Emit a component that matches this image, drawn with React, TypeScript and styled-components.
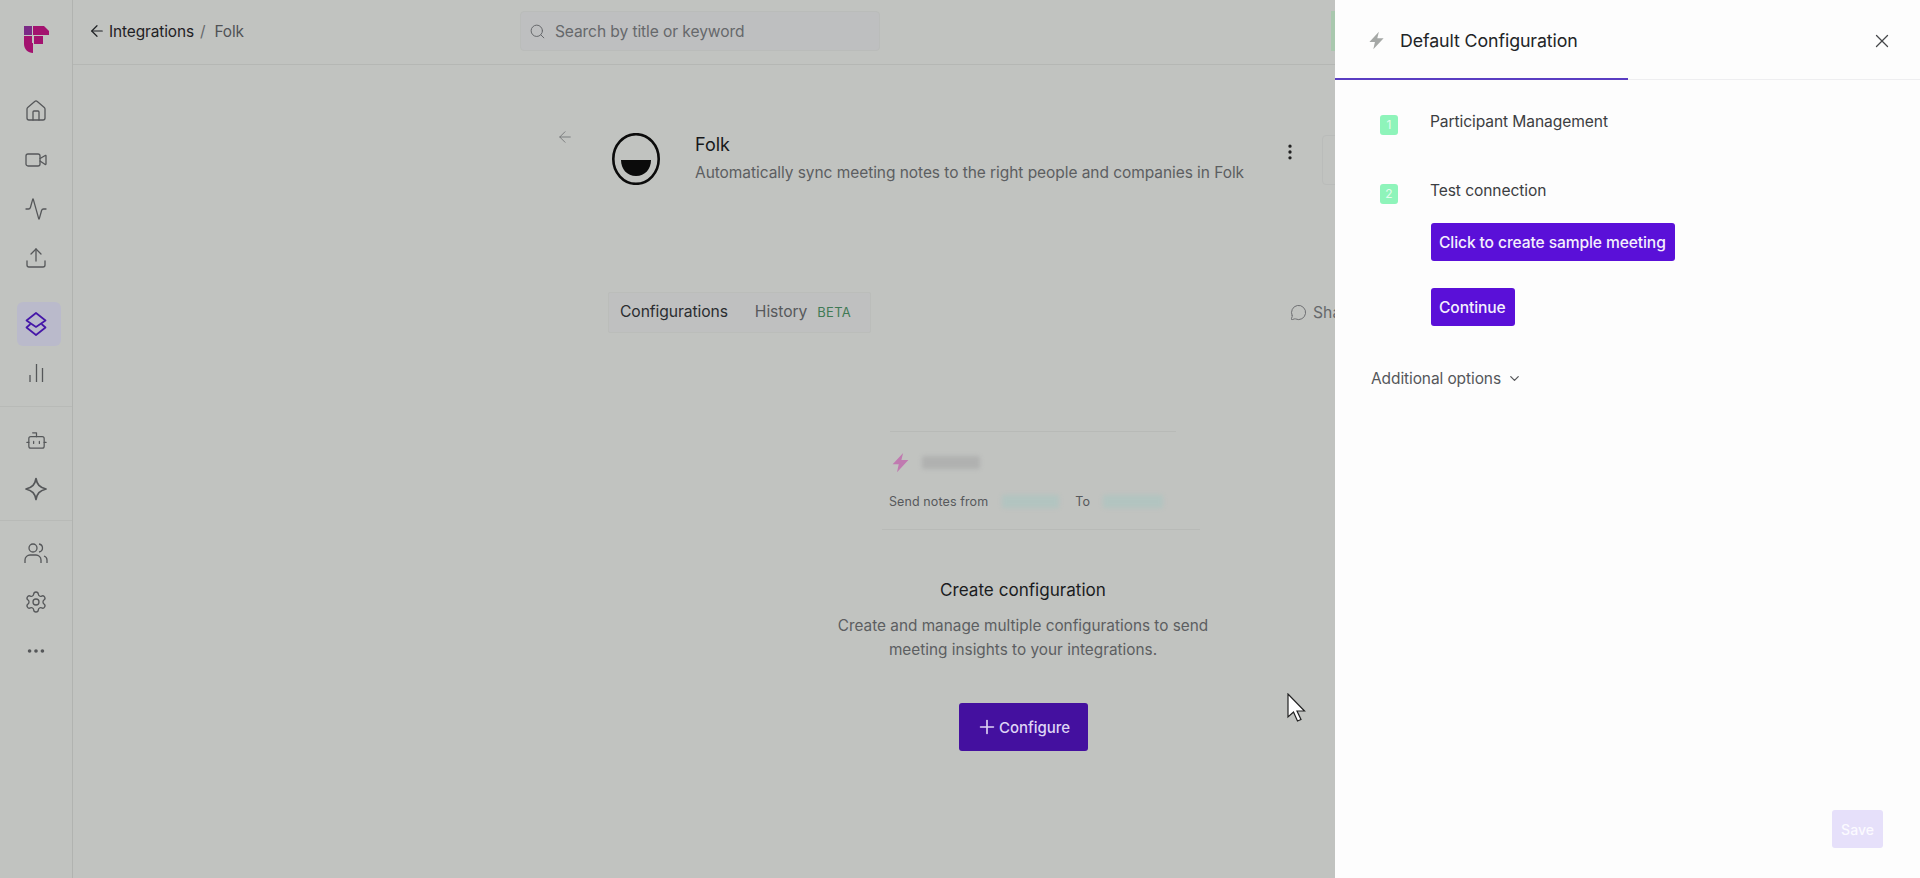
import React from 'react';
import styled, { createGlobalStyle } from 'styled-components';
import { House, Video, Activity, Upload, Bot, Settings, MoreHorizontal, Search, ArrowLeft, MoreVertical, MessageCircle, Plus, X, ChevronDown } from 'lucide-react';

const Global = createGlobalStyle`
  html, body { margin: 0; padding: 0; height: 100%; background: #c1c3c0; }
  body { font-family: Inter, "Liberation Sans", sans-serif; overflow: hidden; }
`;

const Page = styled.div`display: flex; width: 1920px; height: 878px; overflow: hidden; position: relative; background: #c1c3c0;`;
const Sidebar = styled.aside`width: 72px; flex: none; border-right: 1px solid #b1b3b0; box-sizing: content-box; display: flex; flex-direction: column; align-items: stretch; color: #555759;`;
const LogoWrap = styled.div`height: 89px; padding: 25px 0 0 24px; box-sizing: border-box;`;
const NavGroup = styled.div<{ $gapBelow: number; $gapAbove?: number; $ruled?: boolean }>`
  display: flex; flex-direction: column; gap: 5px; align-items: center;
  padding-top: ${p => p.$gapAbove ?? 0}px;
  padding-bottom: ${p => p.$gapBelow}px;
  border-bottom: 1px solid ${p => (p.$ruled ? '#b8bab7' : 'transparent')};
`;
const NavItem = styled.div<{ $active?: boolean }>`
  width: 44px; height: 44px; border-radius: 6px; display: flex; align-items: center; justify-content: center;
  box-sizing: border-box;
  margin-left: ${p => (p.$active ? 5 : 0)}px;
  padding-right: ${p => (p.$active ? 5 : 0)}px;
  background: ${p => (p.$active ? '#babacb' : 'transparent')};
  color: ${p => (p.$active ? '#4517a8' : '#555759')};
`;
const Main = styled.main`width: 1262px; flex: none; overflow: hidden; display: flex; flex-direction: column;`;
const Topbar = styled.header`height: 65px; flex: none; box-sizing: border-box; border-bottom: 1px solid #b5b7b4; display: flex; align-items: center; padding-left: 15px; padding-bottom: 2px;`;
const Crumbs = styled.nav`width: 433px; display: flex; align-items: center; font-size: 15.4px; color: #1f2124; letter-spacing: -0.1px;`;
const CrumbLink = styled.span`margin-left: 3px;`;
const CrumbSep = styled.span`margin: 0 9px 0 6px; color: #66686b;`;
const CrumbCurrent = styled.span`color: #505256;`;
const SearchBox = styled.div`width: 361px; height: 40px; box-sizing: border-box; border: 1px solid #babcba; border-radius: 4px; background: #bebfc0; display: flex; align-items: center; gap: 9px; padding-left: 8px; color: #66686b; font-size: 15.6px; letter-spacing: -0.1px;`;
const TopEdge = styled.div`width: 4px; height: 40px; margin-left: 451px; background: #a9c8ae;`;
const Column = styled.div`width: 830px; margin-left: 535px; display: flex; flex-direction: column;`;
const Header = styled.section`display: flex; align-items: flex-start; margin-top: 67px; height: 52px; white-space: nowrap;`;
const BackBtn = styled.div`width: 18px; margin: -4px 38px 0 -52px; color: #6e7072; flex: none;`;
const FolkText = styled.div`margin-left: 35px; width: 585px; flex: none;`;
const FolkName = styled.div`font-size: 18px; line-height: 26px; color: #17181a;`;
const FolkDesc = styled.div`font-size: 15.5px; line-height: 28px; margin-top: 1px; color: #5c5e61; letter-spacing: -0.06px;`;
const Kebab = styled.div`margin-top: 10px; color: #222; width: 42px; flex: none;`;
const EdgeBox = styled.div`width: 20px; height: 48px; flex: none; margin-top: 3px; border: 1px solid #babcba; border-radius: 4px;`;
const TabsRow = styled.section`display: flex; align-items: center; justify-content: space-between; margin-top: 108px; white-space: nowrap;`;
const Tabs = styled.div`width: 263px; height: 41px; box-sizing: border-box; border: 1px solid #bbbdba; border-radius: 2px; background: #bfc0c0; display: flex; align-items: center; padding: 0 0 3px 11px; font-size: 15.7px;`;
const Tab = styled.span<{ $on?: boolean }>`color: ${p => (p.$on ? '#2b2d30' : '#57595c')}; margin-right: ${p => (p.$on ? 27 : 10)}px; letter-spacing: -0.1px;`;
const Beta = styled.span`font-size: 13px; color: #3f7a55; letter-spacing: 0.3px; margin-top: 2px;`;
const Share = styled.div`display: flex; align-items: center; gap: 6px; margin-right: 82px; color: #66686b; font-size: 15.7px;`;
const Card = styled.section`margin: 98px 0 0 274px; width: 318px; height: 98px; display: flex; flex-direction: column; border-bottom: 1px solid #b8bab7;`;
const CardRule = styled.div`width: 286px; margin-left: 8px; border-top: 1px solid #b8bab7;`;
const CardTitle = styled.div`display: flex; align-items: center; gap: 11px; margin: 19px 0 0 8px; height: 22px;`;
const BlurChip = styled.div<{ $w: number; $c: string }>`width: ${p => p.$w}px; height: 13px; background: ${p => p.$c}; filter: blur(2px); border-radius: 2px;`;
const CardLine = styled.div`display: flex; align-items: center; margin: 21px 0 0 7px; font-size: 12.5px; color: #57595c; letter-spacing: 0.1px; white-space: nowrap;`;
const Gap = styled.span<{ $w: number }>`display: inline-block; width: ${p => p.$w}px;`;
const Empty = styled.section`display: flex; flex-direction: column; align-items: center; text-align: center; margin-top: 47px;`;
const EmptyTitle = styled.h2`margin: 0; font-size: 17.1px; font-weight: 400; line-height: 26px; color: #1b1c1e;`;
const EmptyDesc = styled.p`margin: 11px 0 0; font-size: 15.35px; line-height: 24px; color: #5c5e61; width: 420px;`;
const ConfigureBtn = styled.button`margin-top: 41px; width: 129px; height: 48px; border: 0; border-radius: 3px; background: #44109f; color: #dfd5f5; font: 500 15px Inter, sans-serif; display: flex; align-items: center; justify-content: center; gap: 1px; padding: 0;`;
const Panel = styled.aside`width: 586px; height: 878px; flex: none; background: #fdfdfd; display: flex; flex-direction: column;`;
const PanelHead = styled.header`height: 80px; flex: none; box-sizing: border-box; position: relative; border-bottom: 1px solid #eeeef0; display: flex; align-items: center; padding: 2px 28px 0 32px;
  &::after { content: ''; position: absolute; left: 0; bottom: -1px; width: 293px; height: 2px; background: #5a3dc2; }
`;
const PanelTitle = styled.h1`margin: 0 0 0 14px; flex: 1; font-size: 17.8px; font-weight: 400; color: #222426; letter-spacing: -0.1px;`;
const CloseBtn = styled.div`color: #45474a; display: flex;`;
const Steps = styled.div`padding: 30px 0 0 45px; display: flex; flex-direction: column;`;
const Step = styled.div<{ $gap: number }>`display: flex; align-items: flex-start; margin-bottom: ${p => p.$gap}px;`;
const Badge = styled.div`width: 18px; height: 20px; margin-top: 5px; border-radius: 3px; background: #8ef4ba; color: #e4fbee; font-size: 12px; line-height: 20px; text-align: center; flex: none;`;
const StepLabel = styled.div`margin: 1px 0 0 32px; font-size: 15.6px; line-height: 22px; color: #3c3e42; letter-spacing: -0.1px;`;
const PanelActions = styled.div`display: flex; flex-direction: column; align-items: flex-start; gap: 27px; padding: 19px 0 0 96px;`;
const PrimaryBtn = styled.button`height: 38px; padding: 0 9px 0 8px; border: 0; border-radius: 3px; background: #5a10d8; color: #f4effd; font: 500 15.6px Inter, sans-serif; letter-spacing: -0.1px; white-space: nowrap;`;
const More = styled.div`display: flex; align-items: center; gap: 6px; padding: 43px 0 0 36px; font-size: 15.5px; color: #55575a; letter-spacing: -0.1px;`;
const PanelFoot = styled.footer`margin-top: auto; display: flex; justify-content: flex-end; padding: 0 38px 30px 0;`;
const SaveBtn = styled.button`width: 51px; height: 38px; border: 0; border-radius: 3px; background: #e6e0fa; color: #fbfaff; font: 500 14px Inter, sans-serif; padding: 0;`;
const Cursor = styled.svg`position: absolute; left: 1286px; top: 693px;`;
const LogoMark = styled.svg`flex: none; margin-top: 1px;`;

const I = { size: 24, strokeWidth: 1.3 };

const Logo = () => (
  <svg width="25" height="28" viewBox="0 0 25 28">
    <rect x="0" y="1" width="8" height="9" fill="#7b2a86" />
    <path d="M9 1h11l5 5v4H9z" fill="#a3126f" />
    <path d="M0 11h8v7h1v10C4 28 0 24 0 19z" fill="#a3126f" />
    <rect x="10" y="11" width="9" height="8" fill="#a3126f" />
  </svg>
);
const Layers = () => (
  <svg width="24" height="24" viewBox="0 0 24 24" fill="none" stroke="currentColor" strokeWidth="1.7" strokeLinejoin="round">
    <path d="M12 1 21.500 8.500 12 15 2.500 8.500z" />
    <path d="M6.500 12 2.500 15.500 12 23l9.500-7.500-4-3.500" />
  </svg>
);
const Bars = () => (
  <svg width="24" height="24" viewBox="0 0 24 24" fill="none" stroke="currentColor" strokeWidth="1.3">
    <path d="M6 21v-7M12.500 21V3M18.500 21V7" />
  </svg>
);
const Spark = () => (
  <svg width="24" height="24" viewBox="0 0 24 24" fill="none" stroke="currentColor" strokeWidth="1.7" strokeLinejoin="round">
    <path d="M12 1.500c1 6 3.500 8.800 10 10.500-6.500 1.700-9 4.500-10 10.500-1-6-3.500-8.800-10-10.500C8.500 10.300 11 7.500 12 1.500z" />
  </svg>
);
const People = () => (
  <svg width="24" height="24" viewBox="0 0 24 24" fill="none" stroke="currentColor" strokeWidth="1.3">
    <circle cx="9" cy="7" r="4" />
    <path d="M1 22v-3c0-3 2.500-5 5-5h6c2.500 0 5 2 5 5v3" />
    <path d="M15 3c2.500.5 3.500 2 3.500 4s-1 3.500-3.500 4" />
    <path d="M20 15c2 .8 3 2.200 3 4v3" />
  </svg>
);
const Bolt = ({ c, s }: { c: string; s: number }) => (
  <svg width={s} height={s} viewBox="0 0 24 24"><path d="M15 1 3 14h7l-2 9 13-14h-8z" fill={c} /></svg>
);
const FolkLogo = () => (
  <LogoMark width="48" height="52" viewBox="0 0 48 52">
    <ellipse cx="24" cy="26" rx="22.700" ry="24.800" fill="none" stroke="#0b0b0b" strokeWidth="2.600" />
    <path d="M9 27h30c0 9-6 16-15 16S9 36 9 27z" fill="#0b0b0b" />
  </LogoMark>
);

export default function App() {
  return (
    <Page>
      <Global />
      <Sidebar>
        <LogoWrap><Logo /></LogoWrap>
        <NavGroup $gapBelow={21}>
          <NavItem><House {...I} /></NavItem>
          <NavItem><Video {...I} /></NavItem>
          <NavItem><Activity {...I} /></NavItem>
          <NavItem><Upload {...I} /></NavItem>
        </NavGroup>
        <NavGroup $gapBelow={11} $ruled>
          <NavItem $active><Layers /></NavItem>
          <NavItem><Bars /></NavItem>
        </NavGroup>
        <NavGroup $gapAbove={11} $gapBelow={9} $ruled>
          <NavItem><Bot size={23} strokeWidth={1.3} /></NavItem>
          <NavItem><Spark /></NavItem>
        </NavGroup>
        <NavGroup $gapAbove={10} $gapBelow={0}>
          <NavItem><People /></NavItem>
          <NavItem><Settings {...I} /></NavItem>
          <NavItem><MoreHorizontal size={22} strokeWidth={2} /></NavItem>
        </NavGroup>
      </Sidebar>
      <Main>
        <Topbar>
          <Crumbs>
            <ArrowLeft size={18} strokeWidth={1.6} />
            <CrumbLink>Integrations</CrumbLink>
            <CrumbSep>/</CrumbSep>
            <CrumbCurrent>Folk</CrumbCurrent>
          </Crumbs>
          <SearchBox><Search size={17} strokeWidth={1.4} />Search by title or keyword</SearchBox>
          <TopEdge />
        </Topbar>
        <Column>
          <Header>
            <BackBtn><ArrowLeft size={18} strokeWidth={1.1} /></BackBtn>
            <FolkLogo />
            <FolkText>
              <FolkName>Folk</FolkName>
              <FolkDesc>Automatically sync meeting notes to the right people and companies in Folk</FolkDesc>
            </FolkText>
            <Kebab><MoreVertical size={20} strokeWidth={2} /></Kebab>
            <EdgeBox />
          </Header>
          <TabsRow>
            <Tabs>
              <Tab $on>Configurations</Tab>
              <Tab>History</Tab>
              <Beta>BETA</Beta>
            </Tabs>
            <Share><MessageCircle size={17} strokeWidth={1.3} />Share</Share>
          </TabsRow>
          <Card>
            <CardRule />
            <CardTitle>
              <Bolt c="#c07ab0" s={21} />
              <BlurChip $w={58} $c="#b0b1b0" />
            </CardTitle>
            <CardLine>
              Send notes from
              <Gap $w={14} />
              <BlurChip $w={57} $c="#b2c4c0" />
              <Gap $w={16} />
              To
              <Gap $w={13} />
              <BlurChip $w={60} $c="#b2c4c0" />
            </CardLine>
          </Card>
          <Empty>
            <EmptyTitle>Create configuration</EmptyTitle>
            <EmptyDesc>Create and manage multiple configurations to send meeting insights to your integrations.</EmptyDesc>
            <ConfigureBtn><Plus size={22} strokeWidth={1.8} />Configure</ConfigureBtn>
          </Empty>
        </Column>
      </Main>
      <Panel>
        <PanelHead>
          <Bolt c="#a5a8a6" s={19} />
          <PanelTitle>Default Configuration</PanelTitle>
          <CloseBtn><X size={22} strokeWidth={1.4} /></CloseBtn>
        </PanelHead>
        <Steps>
          <Step $gap={44}><Badge>1</Badge><StepLabel>Participant Management</StepLabel></Step>
          <Step $gap={0}><Badge>2</Badge><StepLabel>Test connection</StepLabel></Step>
        </Steps>
        <PanelActions>
          <PrimaryBtn>Click to create sample meeting</PrimaryBtn>
          <PrimaryBtn>Continue</PrimaryBtn>
        </PanelActions>
        <More>Additional options <ChevronDown size={15} strokeWidth={2} /></More>
        <PanelFoot><SaveBtn>Save</SaveBtn></PanelFoot>
      </Panel>
      <Cursor width="20" height="30" viewBox="0 0 20 30">
        <path d="M2 1v23l5.500-5 4 9 3.500-1.500-4-8.500h7.500z" fill="#fff" stroke="#222" strokeWidth="1.200" />
      </Cursor>
    </Page>
  );
}
